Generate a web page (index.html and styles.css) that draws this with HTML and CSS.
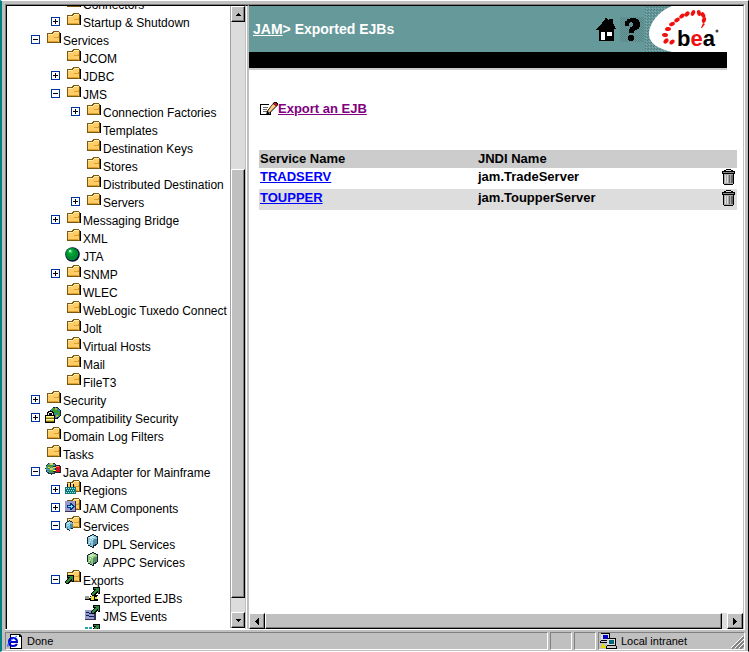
FILE: index.html
```html
<!DOCTYPE html>
<html lang="en">
<head>
<meta charset="utf-8">
<title>Exported EJBs</title>
<link rel="stylesheet" href="styles.css">
</head>
<body>
<svg class="sprite" aria-hidden="true">
  <symbol id="folder" viewBox="0 0 18 17">
    <path fill="#000" d="M3 14h13V4h-1v9H3z"/>
    <path fill="#7b5a10" d="M2 4h5V3h1V2h6v1h1v11H2z"/>
    <path fill="#fc6" d="M3 5h5V4h1V3h5v10H3z"/>
    <path fill="#ffeeb0" d="M3 5h5V4h1V3h5v1H9v1H8v1H3z"/>
    <path fill="#e0a030" d="M9 8h4V7h1v2H9zM3 12h10v1H3z"/>
  </symbol>
  <symbol id="plus" viewBox="0 0 9 9">
    <path fill="#039" d="M0 0h9v9H0z"/><path fill="#fff" d="M1 1h7v7H1z"/>
    <path fill="#000" d="M2 4h5v1H2zM4 2h1v5H4z"/>
  </symbol>
  <symbol id="minus" viewBox="0 0 9 9">
    <path fill="#039" d="M0 0h9v9H0z"/><path fill="#fff" d="M1 1h7v7H1z"/>
    <path fill="#000" d="M2 4h5v1H2z"/>
  </symbol>
  <symbol id="ball" viewBox="0 0 18 17">
    <circle cx="7.5" cy="9.5" r="7.3" fill="#013"/><circle cx="7" cy="9" r="6.3" fill="#083"/>
    <circle cx="6" cy="7.5" r="4" fill="#0a3b"/><circle cx="5.5" cy="6.5" r="2" fill="#3c5"/>
    <path fill="#9fc" d="M4 5h2v2H4z"/>
  </symbol>
  <symbol id="secure" viewBox="0 0 18 17">
    <circle cx="10.5" cy="6" r="6" fill="#024"/><circle cx="10.3" cy="5.6" r="5.2" fill="#38a"/>
    <path fill="#393" d="M7 1h4v2h2v3h-3v2H7zM13 4h2v5h-3V7h1z"/>
    <path fill="#ca3" d="M10 1h2v2h-2zM11 8h2v2h-2z"/>
    <path fill="#000" d="M2 5h1V4h5v1h1v3h1v8H0V8h2z"/>
    <path fill="#eed" d="M3 6h1V5h3v1h1v2H7V6H4v2H3z"/>
    <path fill="#d8c84a" d="M1 9h8v6H1z"/><path fill="#ffa" d="M1 9h8v1H1zM1 12h8v1H1z"/>
    <path fill="#886a10" d="M1 11h8v1H1zM1 14h8v1H1z"/>
  </symbol>
  <symbol id="adapter" viewBox="0 0 18 17">
    <circle cx="6.5" cy="7.5" r="6" fill="#234"/><circle cx="6.2" cy="7.2" r="5.1" fill="#49b"/>
    <path fill="#493" d="M2 4h4V2h2v4H6v2H2zM4 9h4v3H5z"/>
    <path fill="#ec5" d="M5 2h3v2H5zM5 7h3v2H5zM3 6h2v1H3z"/>
    <path fill="#222" d="M8 5h3V4h4v1h1v7h-5v-1H8v-1h2V7H8z"/>
    <path fill="#d01020" d="M11 5h4v6h-4z"/><path fill="#f77" d="M11 5h3v1h-3z"/>
    <path fill="#ee3" d="M8 6h3v1H8zM8 9h3v1H8z"/>
  </symbol>
  <symbol id="regions" viewBox="0 0 18 17">
    <use href="#folder" y="-1" width="18" height="17"/>
    <path fill="#000" d="M2 5h1v3h2V4h1v4h2V5h1v3h2v7H0V8h2z"/>
    <path fill="#177" d="M0 8h11v7H0z"/>
    <path fill="#9ee" d="M1 9h1v1H1zM3 9h1v1H3zM5 9h1v1H5zM7 9h1v1H7zM9 9h1v1H9zM2 11h1v1H2zM4 11h1v1H4zM6 11h1v1H6zM8 11h1v1H8zM1 13h1v1H1zM3 13h1v1H3zM5 13h1v1H5zM7 13h1v1H7zM9 13h1v1H9z"/>
  </symbol>
  <symbol id="components" viewBox="0 0 18 17">
    <use href="#folder" y="-1" width="18" height="17"/>
    <path fill="#335" d="M0 4h11v11H0z"/><path fill="#99c" d="M0 4h10v10H0z"/>
    <path fill="#038" d="M2 8h3V6h2v1h1v1h1v1h1v1H9v1H8v1H7v1H5v-2H2z"/>
    <path fill="#7ef" d="M3 9h3V8h1v1h1v1H7v1H6v-1H3z"/>
  </symbol>
  <symbol id="crystal" viewBox="0 0 12 14">
    <path fill="#123" d="M5 0h2v1h2v1h2v8h-1v1H9v1H7v2H5v-1H3v-1H1v-2H0V3h1V2h2V1h2z"/>
    <path fill="currentColor" d="M5 1h2v1h2v1h1v7H8v1H6v2H5v-1H3v-1H1V3h2V2h2z"/>
    <path fill="#fff9" d="M4 2h2v1h2v1H5v1H3V4H2V3h2zM3 6h1v1H3zM5 5h1v1H5zM2 8h1v1H2z"/>
    <path fill="#0356" d="M7 5h3v5H8v1H6V6h1zM3 9h1v2H3z"/>
  </symbol>
  <symbol id="services" viewBox="0 0 18 17">
    <use href="#folder" y="-1" width="18" height="17"/>
    <g color="#7bc4dc"><use href="#crystal" x="0" y="5" width="9" height="11"/></g>
  </symbol>
  <symbol id="dpl" viewBox="0 0 18 17"><g color="#8cc8dc"><use href="#crystal" x="2" y="1" width="12" height="14"/></g></symbol>
  <symbol id="appc" viewBox="0 0 18 17"><g color="#8fcb7c"><use href="#crystal" x="2" y="1" width="12" height="14"/></g></symbol>
  <symbol id="arrow" viewBox="0 0 9 9">
    <path fill="#000" d="M2 0h7v7H7V6H6v1H5v1H4v1H1V8H0V6h1V5h1V4h1V3H2z"/>
    <path fill="#2c8a3c" d="M3 1h5v5H7V4H6v1H5v1H4v1H3v1H1V6h1V5h1V4h1V3h1V2H3z"/>
  </symbol>
  <symbol id="exports" viewBox="0 0 18 17">
    <use href="#folder" y="-1" width="18" height="17"/><use href="#arrow" x="0" y="6" width="9" height="9"/>
  </symbol>
  <symbol id="ejb" viewBox="0 0 18 17">
    <path fill="#000" d="M0 9h4v1h1V9h3V8h5v1h-1v3h1v2H5v-1H0z"/>
    <path fill="#999" d="M0 9h4v3H0z"/><path fill="#ed3" d="M6 9h3v4H6zM10 10h2v2h-2z"/><path fill="#eee" d="M4 10h2v1H4z"/>
    <use href="#arrow" x="6" y="0" width="9" height="9"/>
  </symbol>
  <symbol id="events" viewBox="0 0 18 17">
    <path fill="#335" d="M0 5h11v10H0z"/><path fill="#99c" d="M0 5h9v9H0z"/>
    <path fill="none" stroke="#025" d="M1 8l2-1 2 2 2-1 2 1M1 11l2-1 2 2 2-1 2 1"/>
    <use href="#arrow" x="6" y="0" width="9" height="9"/>
  </symbol>
  <symbol id="export-more" viewBox="0 0 18 17">
    <path fill="#2aa" d="M0 4h3v2H0zM4 4h3v2H4z"/>
    <use href="#arrow" x="6" y="1" width="9" height="9"/>
  </symbol>
  <symbol id="trash" viewBox="0 0 14 16">
    <path fill="#000" d="M4 0h5v1h2v1h2v3h-1v10h-1v1H2v-1H1V5H0V2h2V1h2z"/>
    <path fill="#ddd" d="M4 1h5v1H4z"/><path fill="#888" d="M1 3h11v1H1z"/>
    <path fill="#aaa" d="M2 5h9v10H2z"/><path fill="#ddd" d="M3 6h1v8H3zM5 6h1v8H5z"/><path fill="#666" d="M7 6h1v8H7zM9 6h2v8H9z"/>
  </symbol>
</svg>

<div class="window">
  <div class="frames">
    <nav class="pane nav-pane" aria-label="Console">
      <ul class="tree">
        <li><ul>
          <li><div class="row"><span class="slot"></span><svg class="icon"><use href="#folder"/></svg><a href="#">Connectors</a></div></li>
          <li><div class="row"><button class="slot" aria-label="Expand"><svg><use href="#plus"/></svg></button><svg class="icon"><use href="#folder"/></svg><a href="#">Startup &amp; Shutdown</a></div></li>
        </ul></li>
        <li><div class="row"><button class="slot" aria-label="Collapse"><svg><use href="#minus"/></svg></button><svg class="icon"><use href="#folder"/></svg><a href="#">Services</a></div>
          <ul>
            <li><div class="row"><span class="slot"></span><svg class="icon"><use href="#folder"/></svg><a href="#">JCOM</a></div></li>
            <li><div class="row"><button class="slot" aria-label="Expand"><svg><use href="#plus"/></svg></button><svg class="icon"><use href="#folder"/></svg><a href="#">JDBC</a></div></li>
            <li><div class="row"><button class="slot" aria-label="Collapse"><svg><use href="#minus"/></svg></button><svg class="icon"><use href="#folder"/></svg><a href="#">JMS</a></div>
              <ul>
                <li><div class="row"><button class="slot" aria-label="Expand"><svg><use href="#plus"/></svg></button><svg class="icon"><use href="#folder"/></svg><a href="#">Connection Factories</a></div></li>
                <li><div class="row"><span class="slot"></span><svg class="icon"><use href="#folder"/></svg><a href="#">Templates</a></div></li>
                <li><div class="row"><span class="slot"></span><svg class="icon"><use href="#folder"/></svg><a href="#">Destination Keys</a></div></li>
                <li><div class="row"><span class="slot"></span><svg class="icon"><use href="#folder"/></svg><a href="#">Stores</a></div></li>
                <li><div class="row"><span class="slot"></span><svg class="icon"><use href="#folder"/></svg><a href="#">Distributed Destination</a></div></li>
                <li><div class="row"><button class="slot" aria-label="Expand"><svg><use href="#plus"/></svg></button><svg class="icon"><use href="#folder"/></svg><a href="#">Servers</a></div></li>
              </ul></li>
            <li><div class="row"><button class="slot" aria-label="Expand"><svg><use href="#plus"/></svg></button><svg class="icon"><use href="#folder"/></svg><a href="#">Messaging Bridge</a></div></li>
            <li><div class="row"><span class="slot"></span><svg class="icon"><use href="#folder"/></svg><a href="#">XML</a></div></li>
            <li><div class="row"><span class="slot"></span><svg class="icon smooth"><use href="#ball"/></svg><a href="#">JTA</a></div></li>
            <li><div class="row"><button class="slot" aria-label="Expand"><svg><use href="#plus"/></svg></button><svg class="icon"><use href="#folder"/></svg><a href="#">SNMP</a></div></li>
            <li><div class="row"><span class="slot"></span><svg class="icon"><use href="#folder"/></svg><a href="#">WLEC</a></div></li>
            <li><div class="row"><span class="slot"></span><svg class="icon"><use href="#folder"/></svg><a href="#">WebLogic Tuxedo Connect</a></div></li>
            <li><div class="row"><span class="slot"></span><svg class="icon"><use href="#folder"/></svg><a href="#">Jolt</a></div></li>
            <li><div class="row"><span class="slot"></span><svg class="icon"><use href="#folder"/></svg><a href="#">Virtual Hosts</a></div></li>
            <li><div class="row"><span class="slot"></span><svg class="icon"><use href="#folder"/></svg><a href="#">Mail</a></div></li>
            <li><div class="row"><span class="slot"></span><svg class="icon"><use href="#folder"/></svg><a href="#">FileT3</a></div></li>
          </ul></li>
        <li><div class="row"><button class="slot" aria-label="Expand"><svg><use href="#plus"/></svg></button><svg class="icon"><use href="#folder"/></svg><a href="#">Security</a></div></li>
        <li><div class="row"><button class="slot" aria-label="Expand"><svg><use href="#plus"/></svg></button><svg class="icon"><use href="#secure"/></svg><a href="#">Compatibility Security</a></div></li>
        <li><div class="row"><span class="slot"></span><svg class="icon"><use href="#folder"/></svg><a href="#">Domain Log Filters</a></div></li>
        <li><div class="row"><span class="slot"></span><svg class="icon"><use href="#folder"/></svg><a href="#">Tasks</a></div></li>
        <li><div class="row"><button class="slot" aria-label="Collapse"><svg><use href="#minus"/></svg></button><svg class="icon"><use href="#adapter"/></svg><a href="#">Java Adapter for Mainframe</a></div>
          <ul>
            <li><div class="row"><button class="slot" aria-label="Expand"><svg><use href="#plus"/></svg></button><svg class="icon"><use href="#regions"/></svg><a href="#">Regions</a></div></li>
            <li><div class="row"><button class="slot" aria-label="Expand"><svg><use href="#plus"/></svg></button><svg class="icon"><use href="#components"/></svg><a href="#">JAM Components</a></div></li>
            <li><div class="row"><button class="slot" aria-label="Collapse"><svg><use href="#minus"/></svg></button><svg class="icon"><use href="#services"/></svg><a href="#">Services</a></div>
              <ul>
                <li><div class="row"><span class="slot"></span><svg class="icon"><use href="#dpl"/></svg><a href="#">DPL Services</a></div></li>
                <li><div class="row"><span class="slot"></span><svg class="icon"><use href="#appc"/></svg><a href="#">APPC Services</a></div></li>
              </ul></li>
            <li><div class="row"><button class="slot" aria-label="Collapse"><svg><use href="#minus"/></svg></button><svg class="icon"><use href="#exports"/></svg><a href="#">Exports</a></div>
              <ul>
                <li><div class="row"><span class="slot"></span><svg class="icon"><use href="#ejb"/></svg><a href="#">Exported EJBs</a></div></li>
                <li><div class="row"><span class="slot"></span><svg class="icon"><use href="#events"/></svg><a href="#">JMS Events</a></div></li>
                <li><div class="row"><span class="slot"></span><svg class="icon"><use href="#export-more"/></svg></div></li>
              </ul></li>
          </ul></li>
      </ul>
      <div class="scrollbar vertical">
        <button class="bevel" aria-label="Scroll up"><svg viewBox="0 0 5 3" width="5" height="3"><path d="M2 0h1v1h1v1h1v1H0V2h1V1h1z"/></svg></button>
        <div class="before"></div><div class="bevel thumb"></div><div class="after"></div>
        <button class="bevel" aria-label="Scroll down"><svg viewBox="0 0 5 3" width="5" height="3"><path d="M0 0h5v1H4v1H3v1H2V2H1V1H0z"/></svg></button>
      </div>
    </nav>
    <div class="divider"></div>
    <main class="pane main-pane">
      <div class="content">
        <header class="banner">
          <h1><a href="#">JAM</a>&gt; Exported EJBs</h1>
          <a class="home" href="#" aria-label="Home"><svg viewBox="0 0 20 23" width="20" height="23"><path d="M9 0h2v1h1v1h1V1h4v5h1v2h1v2h1v1h-2v12H3V12H0v-1h1v-1h1V9h1V8h1V7h1V6h1V4h1V3h1V2h1z"/><path fill="#fff" d="M5 14h4v8H5zM11 14h5v4h-5z"/></svg></a>
          <a class="help" href="#" aria-label="Help"><svg viewBox="0 0 24 25" width="24" height="25"><path d="M5 4h2V2h3V1h6v1h2v1h1v2h1v5h-1v2h-2v1h-2v1h-1v2H9v-4h1v-2h2V9h1V6h-1V5h-2v1H9v3H5zM9 18h4v1h1v4h-1v1H9v-1H8v-4h1z"/></svg></a>
          <svg class="logo" viewBox="0 0 82 46" width="82" height="46" role="img" aria-label="bea">
            <defs><pattern id="dither" width="3" height="3" patternUnits="userSpaceOnUse"><path fill="#4c7c7c" d="M0 0h1v1H0zM2 1h1v1H2z"/><path fill="#8ab" d="M1 2h1v1H1z"/></pattern></defs>
            <path fill="url(#dither)" d="M0 0h82v46H0z"/>
            <path fill="#fff" d="M27 0C14 5 4 17 4 28c0 10 10 15 23 18h55V0z"/>
            <g fill="#f01010">
              <ellipse cx="59" cy="14" rx="2" ry="3" transform="rotate(15 59 14)"/>
              <ellipse cx="58" cy="9" rx="2" ry="3" transform="rotate(-30 58 9)"/>
              <ellipse cx="54" cy="7" rx="2" ry="3" transform="rotate(-10 54 7)"/>
              <ellipse cx="48" cy="7" rx="2" ry="3" transform="rotate(25 48 7)"/>
              <ellipse cx="42" cy="8" rx="3" ry="2" transform="rotate(-45 42 8)"/>
              <ellipse cx="37" cy="10" rx="3" ry="2" transform="rotate(-40 37 10)"/>
              <ellipse cx="32" cy="14" rx="3" ry="2" transform="rotate(-30 32 14)"/>
              <ellipse cx="27" cy="18" rx="3" ry="2" transform="rotate(-25 27 18)"/>
              <ellipse cx="23" cy="23" rx="3" ry="2" transform="rotate(-10 23 23)"/>
              <ellipse cx="20" cy="29" rx="3" ry="2" transform="rotate(10 20 29)"/>
              <ellipse cx="21" cy="35" rx="3" ry="2" transform="rotate(-45 21 35)"/>
              <ellipse cx="27" cy="36" rx="3" ry="2" transform="rotate(-35 27 36)"/>
              <path d="M58 17l2 1-3 4h-1z"/>
            </g>
            <text class="wordmark" x="32" y="40">b<tspan fill="#f01010">e</tspan>a</text>
            <circle cx="72" cy="25" r="1.5" fill="#444"/>
          </svg>
        </header>
        <div class="stripe"></div>
        <p class="action"><a href="#"><svg viewBox="0 0 18 14" width="18" height="14">
          <path d="M0 2h9v1H1v9h9v-2h1v3H0z"/><path fill="#666" d="M3 5h5v1H3zM3 7h4v1H3zM3 9h4v1H3z"/>
          <path d="M14 0h3v1h1v2L9 12l-3 1 1-4z"/><path fill="#fc8" d="M13 2l3 2-7 7-1-2z"/><path fill="#d11" d="M14 1h2l1 1v1l-1 1-2-2z"/></svg><span>Export an EJB</span></a></p>
        <table>
          <thead><tr><th class="name">Service Name</th><th>JNDI Name</th><th class="tool"></th></tr></thead>
          <tbody>
            <tr><td><a href="#">TRADSERV</a></td><td>jam.TradeServer</td><td class="tool"><button aria-label="Delete TRADSERV"><svg width="14" height="16"><use href="#trash"/></svg></button></td></tr>
            <tr><td><a href="#">TOUPPER</a></td><td>jam.ToupperServer</td><td class="tool"><button aria-label="Delete TOUPPER"><svg width="14" height="16"><use href="#trash"/></svg></button></td></tr>
          </tbody>
        </table>
      </div>
      <div class="scrollbar horizontal">
        <button class="bevel" aria-label="Scroll left"><svg viewBox="0 0 4 7" width="4" height="7"><path d="M3 0h1v7H3V6H2V5H1V4H0V3h1V2h1V1h1z"/></svg></button>
        <div class="bevel thumb"></div><div class="after"></div>
        <button class="bevel" aria-label="Scroll right"><svg viewBox="0 0 4 7" width="4" height="7"><path d="M0 0h1v1h1v1h1v1h1v1H3v1H2v1H1v1H0z"/></svg></button>
      </div>
    </main>
  </div>
  <footer class="status">
    <div class="cell message"><svg viewBox="0 0 16 15" width="16" height="15">
      <path d="M3 0h10l2 2v13H3z"/><path fill="#fff" d="M4 1h8v2h2v11H4z"/>
      <path fill="none" stroke="#00c" stroke-width="2" d="M3 8h7q0-4-4-4T2 8t4 4q3 0 4-2"/><path fill="none" stroke="#06f" d="M1 13Q-1 9 10 2"/></svg><span>Done</span></div>
    <div class="cell small"></div>
    <div class="cell small"></div>
    <div class="cell zone"><svg viewBox="0 0 17 16" width="17" height="16">
      <path d="M1 0h9v8H1z"/><path fill="#ddd" d="M1 1h8v6H1z"/><path fill="#00c" d="M3 2h5v4H3z"/><path d="M0 8h9v2H0z"/><path fill="#ccc" d="M1 8h7v1H1z"/>
      <path d="M7 5h9v8H7z"/><path fill="#ddd" d="M7 6h8v6H7z"/><path fill="#067" d="M9 7h5v4H9z"/><path d="M6 13h11v3H6z"/><path fill="#ccc" d="M7 13h9v2H7z"/>
      <path fill="#dd0" d="M2 11h2v2h2v2H1v-2h1z"/></svg><span>Local intranet</span>
      <svg class="grip" viewBox="0 0 13 13" width="13" height="13"><path stroke="#808080" stroke-width="2" d="M1 13L13 1M5 13l8-8M9 13l4-4"/><path stroke="#fff" d="M0 12L12 0M4 12l9-9M8 12l5-5"/></svg></div>
  </footer>
</div>
</body>
</html>
```
FILE: styles.css
```css
* { box-sizing: border-box; }

body {
  margin: 0;
  background: #c0c0c0;
  color: #000;
  font: 12px/18px "Liberation Sans", Arial, sans-serif;
}

.sprite { position: absolute; width: 0; height: 0; }

button {
  margin: 0;
  padding: 0;
  border: 0;
  background: none;
}

.window {
  display: flex;
  flex-direction: column;
  height: 100vh;
  border-top: 1px solid #fff;
  border-right: 1px solid #000;
  border-left: 2px solid #008080;
  border-bottom: 1px solid #fff;
}

.frames {
  flex: 1;
  min-height: 0;
  display: flex;
  margin: 3px 3px 0;
  border: 1px solid #808080;
  border-right-color: #fff;
  border-bottom: 0;
}

.pane {
  display: flex;
  min-width: 0;
  min-height: 0;
  overflow: hidden;
  border-top: 1px solid #000;
  background: #fff;
}

.nav-pane { flex: 0 0 239px; border-left: 1px solid #000; }
.main-pane { flex: 1; flex-direction: column; border-right: 1px solid #c0c0c0; }

.divider {
  flex: 0 0 4px;
  border-top: 1px solid #000;
  border-right: 2px solid #c0c0c0;
  border-left: 1px solid #c0c0c0;
  background: #fff;
}

/* Navigation tree */
ul { margin: 0; padding: 0; list-style: none; }
.tree {
  flex: 1;
  min-width: 0;
  overflow: hidden;
  margin-top: -10px;
  padding-left: 24px;
}
.tree ul { padding-left: 20px; }
.row {
  display: flex;
  align-items: flex-start;
  height: 18px;
  white-space: nowrap;
}
.row a { color: #000; text-decoration: none; }
.slot { flex: none; width: 14px; height: 18px; text-align: left; }
.slot svg { display: block; width: 9px; height: 9px; margin-bottom: 4px; shape-rendering: crispEdges; }
.icon { flex: none; width: 18px; height: 17px; margin-top: -3px; shape-rendering: crispEdges; }
.smooth { shape-rendering: auto; }

/* Scrollbars */
.scrollbar { display: flex; flex: none; background: #dcdcdc; }
.vertical { flex-direction: column; width: 15px; margin-bottom: 1px; border-left: 1px solid #a0a0a0; }
.horizontal { height: 16px; }
.bevel {
  display: flex;
  align-items: center;
  justify-content: center;
  flex: none;
  border: 1px solid #fff;
  border-right-color: #000;
  border-bottom-color: #000;
  background: #c0c0c0;
  box-shadow: inset -1px -1px #808080;
}
.vertical .bevel { height: 16px; }
.horizontal .bevel { width: 16px; }
.vertical .before { flex: 148; }
.vertical .thumb { flex: 430; height: auto; }
.vertical .after { flex: 14; }
.horizontal .thumb { flex: 1; width: auto; }
.horizontal .after { flex: none; width: 5px; }

/* Main page */
.content { flex: 1; min-height: 0; overflow: hidden; font-size: 13px; font-weight: bold; }
.banner {
  display: flex;
  align-items: center;
  height: 46px;
  margin-right: 16px;
  padding-left: 4px;
  background: #699;
}
h1 { flex: 1; margin: 0; color: #fff; font-size: 14px; line-height: 18px; }
h1 a { color: #fff; }
.banner svg { display: block; }
.home { margin-right: 4px; }
.help {
  margin-right: 1px;
  background: repeating-conic-gradient(#588585 0 25%, #699 0 50%) 0 0 / 2px 2px;
}
.logo { flex: none; }
.wordmark { font: bold 22px "Liberation Sans", sans-serif; }
.stripe { height: 18px; margin-right: 16px; border-bottom: 2px solid #ccc; background: #000; }

.action { margin: 29px 0 31px 11px; line-height: 18px; }
.action a { display: flex; align-items: center; width: max-content; height: 20px; color: #800080; text-decoration: none; }
.action span { text-decoration: underline; }

table { width: calc(100% - 16px); margin-left: 10px; border-collapse: collapse; line-height: 18px; }
th, td { padding: 0 1px; text-align: left; vertical-align: top; }
th { height: 18px; background: #ccc; }
td { height: 21px; }
.name { width: 218px; }
.tool { width: 16px; }
td button { display: block; padding-top: 1px; }
td svg { display: block; }
tbody tr:nth-child(even) { background: #ddd; }
td a { color: #00f; }

/* Status bar */
.status {
  display: flex;
  flex: none;
  gap: 2px;
  height: 22px;
  margin: 0 3px;
  padding: 2px 0 1px;
  border-top: 1px solid #fff;
  font-size: 11px;
}
.cell {
  display: flex;
  align-items: center;
  gap: 4px;
  border: 1px solid #808080;
  border-right-color: #fff;
  border-bottom-color: #fff;
}
.message { flex: 1; padding-left: 1px; }
.small { width: 22px; }
.zone { width: 147px; padding-left: 1px; }
.grip { margin-left: auto; align-self: flex-end; }
```
